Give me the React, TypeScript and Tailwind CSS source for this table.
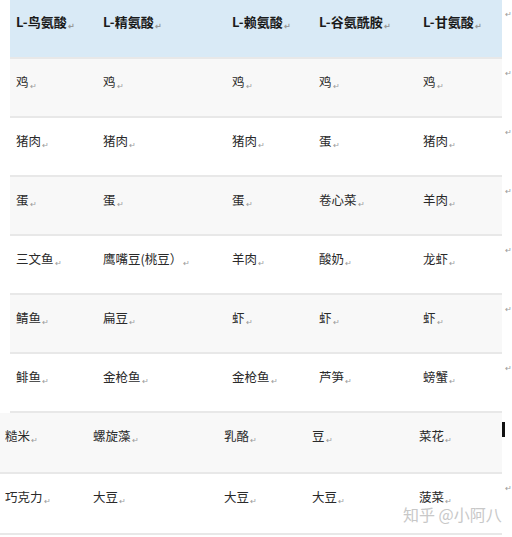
const header = ['L-鸟氨酸', 'L-精氨酸', 'L-赖氨酸', 'L-谷氨酰胺', 'L-甘氨酸'];

const body: string[][] = [
  ['鸡', '鸡', '鸡', '鸡', '鸡'],
  ['猪肉', '猪肉', '猪肉', '蛋', '猪肉'],
  ['蛋', '蛋', '蛋', '卷心菜', '羊肉'],
  ['三文鱼', '鹰嘴豆(桃豆）', '羊肉', '酸奶', '龙虾'],
  ['鲭鱼', '扁豆', '虾', '虾', '虾'],
  ['鲱鱼', '金枪鱼', '金枪鱼', '芦笋', '螃蟹'],
];

const shifted: string[][] = [
  ['糙米', '螺旋藻', '乳酪', '豆', '菜花'],
  ['巧克力', '大豆', '大豆', '大豆', '菠菜'],
];

const Mark = () => <span className="text-[8px] text-[#9a9a9a] ml-[1px] relative top-[2px]">↵</span>;

const mainCols = 'grid-cols-[87px_129px_87px_104px_85px]';
const shiftCols = 'grid-cols-[88px_131px_88px_107px_88px]';

function Row({ cells, bg, shift, bold, tall, end }: { cells: string[]; bg: string; shift?: boolean; bold?: boolean; tall?: boolean; end?: React.ReactNode }) {
  return (
    <div className="flex">
      <div
        className={`grid ${shift ? shiftCols + ' w-[502px]' : mainCols + ' ml-[10px] w-[492px]'} ${bg} ${bold ? 'pt-[14px]' : 'pt-[15px]'} ${tall ? 'h-[61px]' : 'h-[59px]'} border-b-2 border-[#e8e8e8]`}
      >
        {cells.map((c, i) => (
          <div
            key={i}
            className={`${shift ? 'pl-[5px]' : 'pl-[6px]'} leading-[16px] whitespace-nowrap ${bold ? 'text-[13px] font-bold text-[#1a1a1a]' : 'text-[12.5px] text-[#2a2a2a]'}`}
          >
            {c}
            <Mark />
          </div>
        ))}
      </div>
      <div className="w-[10px] relative">{end ?? <span className="absolute left-[3px] top-[8px] text-[8px] text-[#9a9a9a]">↵</span>}</div>
    </div>
  );
}

export default function App() {
  return (
    <div
      className="relative w-[512px] h-[537px] bg-white overflow-hidden"
      style={{ fontFamily: '"Noto Sans CJK SC", "Liberation Serif", sans-serif' }}
    >
      <Row cells={header} bg="bg-[#d9eaf6]" bold />
      {body.map((r, i) => (
        <Row key={i} cells={r} bg={i % 2 === 0 ? 'bg-[#f8f8f8]' : 'bg-white'} />
      ))}
      <Row cells={shifted[0]} bg="bg-[#f8f8f8]" shift tall end={<span className="absolute left-0 top-[9px] w-[3px] h-[15px] bg-[#111]" />} />
      <Row cells={shifted[1]} bg="bg-white" shift tall />
      <div className="absolute left-[403px] top-[504px] text-[16px] text-[#c8c8c8] whitespace-nowrap leading-[20px]">
        知乎 @小阿八
      </div>
    </div>
  );
}
